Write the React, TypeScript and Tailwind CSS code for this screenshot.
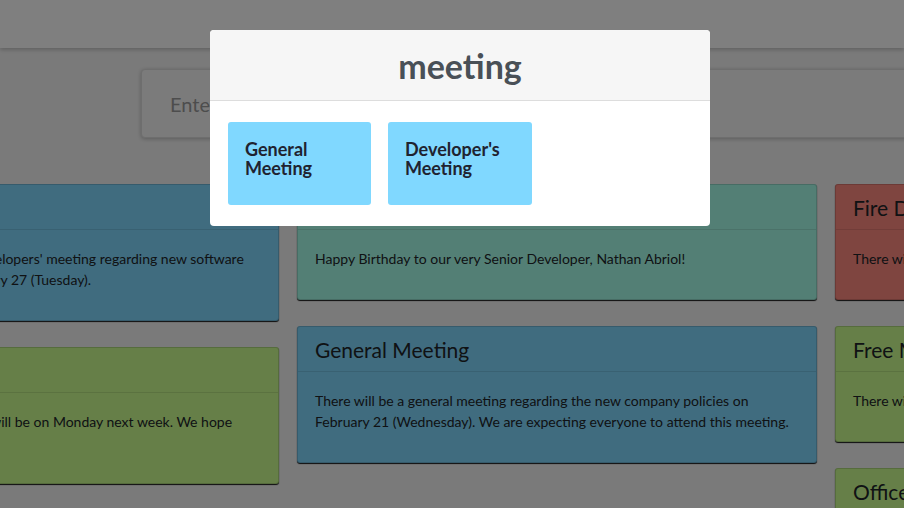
import React from "react";

type Card = { title: string; color: string; lines?: React.ReactNode };

const font = { fontFamily: '"Lato", "Segoe UI", sans-serif' };

function NoteCard({ title, color, lines }: Card) {
  return (
    <div
      className={`${color} rounded-[3px] border border-black/15 shadow-[0_1px_1px_rgba(0,0,0,0.9)]`}
    >
      <div className="border-b border-black/10 px-[17px] pt-[11px] pb-[9px] text-[21px] leading-[24px] text-[#212529]">
        {title}
      </div>
      <div className="px-[17px] pt-[18px] pb-[30px] text-[14px] leading-[21px] text-[#212529]">
        {lines}
      </div>
    </div>
  );
}

export default function App() {
  return (
    <div className="relative h-[508px] w-[904px] overflow-hidden bg-[#f5f5f5]" style={font}>
      {/* navbar */}
      <div className="h-12 w-full bg-white shadow-[0_2px_4px_rgba(0,0,0,0.2)]" />

      {/* search input */}
      <div className="mt-[21px] ml-[141px] flex h-[69px] w-[1000px] items-center rounded-[4px] border border-[#dcdcdc] bg-[#f7f7f7] pl-[28px] text-[20px] text-[#9a9a9a] shadow-[0_1px_4px_rgba(0,0,0,0.25)]">
        Enter keyword to search...
      </div>

      {/* columns */}
      <div className="mt-[46px] ml-[-241px] flex gap-[18px]">
        <div className="flex w-[520px] shrink-0 flex-col gap-[26px]">
          <NoteCard
            title="Developers' Meeting"
            color="bg-[#80d8ff]"
            lines={
              <>
                Attention for all: There will be a developers' meeting regarding new software
                <br />
                updates to be set this coming January 27 (Tuesday).
              </>
            }
          />
          <NoteCard
            title="Company Outing"
            color="bg-[#ccff90]"
            lines={
              <>
                Our annual company teambuilding will be on Monday next week. We hope
                <br />
                everyone can come.
              </>
            }
          />
        </div>
        <div className="flex w-[520px] shrink-0 flex-col gap-[26px]">
          <NoteCard
            title="Happy Birthday"
            color="bg-[#a7ffeb]"
            lines="Happy Birthday to our very Senior Developer, Nathan Abriol!"
          />
          <NoteCard
            title="General Meeting"
            color="bg-[#80d8ff]"
            lines="There will be a general meeting regarding the new company policies on February 21 (Wednesday). We are expecting everyone to attend this meeting."
          />
        </div>
        <div className="flex w-[520px] shrink-0 flex-col gap-[26px]">
          <NoteCard
            title="Fire Drill"
            color="bg-[#ff8a80]"
            lines="There will be a fire drill this Friday."
          />
          <NoteCard
            title="Free Meal"
            color="bg-[#ccff90]"
            lines="There will be free lunch for everyone."
          />
          <NoteCard
            title="Office Cleaning"
            color="bg-[#ccff90]"
            lines="There will be an office cleaning on Saturday."
          />
        </div>
      </div>

      {/* overlay */}
      <div className="absolute inset-0 bg-black/50" />

      {/* modal */}
      <div className="absolute top-[30px] left-[210px] w-[500px] overflow-hidden rounded-[4px] bg-white">
        <div className="flex h-[71px] items-center justify-center border-b border-[#dddddd] bg-[#f6f6f6] pt-[1px] text-[34px] font-bold text-[#495057]">
          meeting
        </div>
        <div className="flex gap-[17px] px-[18px] pt-[21px] pb-[21px]">
          <div className="h-[83px] w-[143px] rounded-[3px] bg-[#80d8ff] px-[17px] pt-[18px] text-[18px] leading-[19px] font-bold text-[#1f2330]">
            General Meeting
          </div>
          <div className="h-[83px] w-[144px] rounded-[3px] bg-[#80d8ff] px-[17px] pt-[18px] text-[18px] leading-[19px] font-bold text-[#1f2330]">
            Developer's Meeting
          </div>
        </div>
      </div>
    </div>
  );
}
